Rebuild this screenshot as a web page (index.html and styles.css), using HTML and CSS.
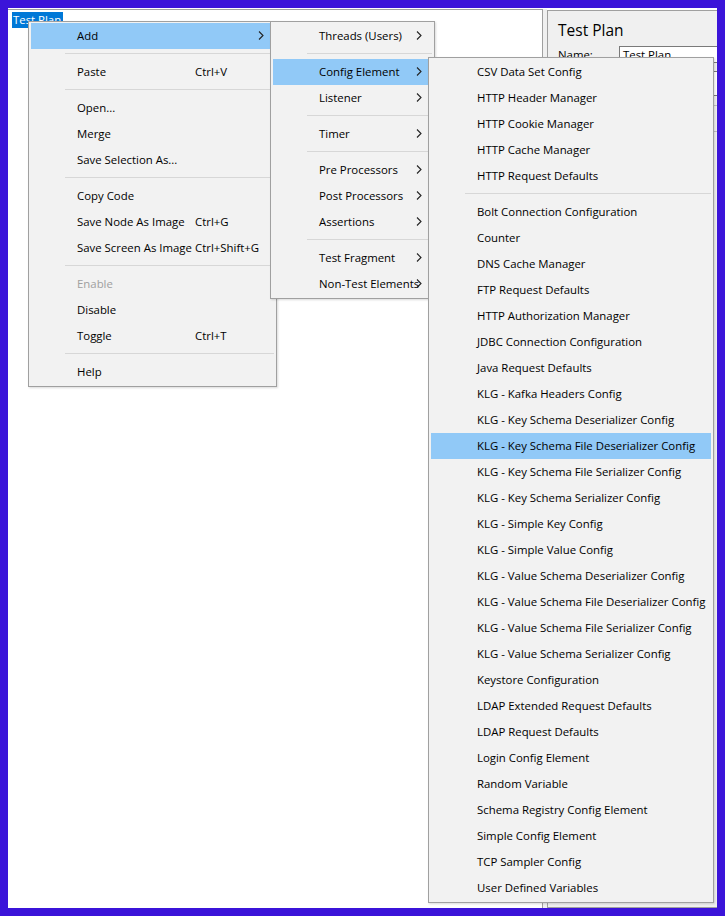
FILE: index.html
```html
<!DOCTYPE html>
<html lang="en">
<head>
  <meta charset="UTF-8"/>
  <title>Test Plan</title>
  <link rel="stylesheet" href="styles.css">
</head>
<body>

  <div class="app">
    <!-- Tree -->
    <div class="tree">
      <span class="node selected">Test Plan</span>
    </div>
    <div class="splitter"></div>

    <!-- Properties -->
    <div class="props">
      <div class="props-title">Test Plan</div>
      <div class="props-row">
        <label>Name:</label>
        <div class="field">Test Plan</div>
      </div>
      <div class="props-row">
        <label></label>
        <div class="field tall"></div>
      </div>
      <div class="group"></div>
      <div class="group"></div>
    </div>
  </div>

  <!-- Context menu -->
  <div class="menu menu-main">
    <div class="item active"><span class="text">Add</span><span class="key"></span><svg class="arrow" viewBox="0 0 6 9"><polyline points="1,0.5 5,4.5 1,8.5"/></svg></div>
    <div class="sep"></div>
    <div class="item"><span class="text">Paste</span><span class="key">Ctrl+V</span></div>
    <div class="sep"></div>
    <div class="item"><span class="text">Open...</span></div>
    <div class="item"><span class="text">Merge</span></div>
    <div class="item"><span class="text">Save Selection As...</span></div>
    <div class="sep"></div>
    <div class="item"><span class="text">Copy Code</span></div>
    <div class="item"><span class="text">Save Node As Image</span><span class="key">Ctrl+G</span></div>
    <div class="item"><span class="text">Save Screen As Image</span><span class="key">Ctrl+Shift+G</span></div>
    <div class="sep"></div>
    <div class="item disabled"><span class="text">Enable</span></div>
    <div class="item"><span class="text">Disable</span></div>
    <div class="item"><span class="text">Toggle</span><span class="key">Ctrl+T</span></div>
    <div class="sep"></div>
    <div class="item"><span class="text">Help</span></div>
  </div>

  <!-- Add submenu -->
  <div class="menu menu-add">
    <div class="item"><span class="text">Threads (Users)</span><svg class="arrow" viewBox="0 0 6 9"><polyline points="1,0.5 5,4.5 1,8.5"/></svg></div>
    <div class="sep"></div>
    <div class="item active"><span class="text">Config Element</span><svg class="arrow" viewBox="0 0 6 9"><polyline points="1,0.5 5,4.5 1,8.5"/></svg></div>
    <div class="item"><span class="text">Listener</span><svg class="arrow" viewBox="0 0 6 9"><polyline points="1,0.5 5,4.5 1,8.5"/></svg></div>
    <div class="sep"></div>
    <div class="item"><span class="text">Timer</span><svg class="arrow" viewBox="0 0 6 9"><polyline points="1,0.5 5,4.5 1,8.5"/></svg></div>
    <div class="sep"></div>
    <div class="item"><span class="text">Pre Processors</span><svg class="arrow" viewBox="0 0 6 9"><polyline points="1,0.5 5,4.5 1,8.5"/></svg></div>
    <div class="item"><span class="text">Post Processors</span><svg class="arrow" viewBox="0 0 6 9"><polyline points="1,0.5 5,4.5 1,8.5"/></svg></div>
    <div class="item"><span class="text">Assertions</span><svg class="arrow" viewBox="0 0 6 9"><polyline points="1,0.5 5,4.5 1,8.5"/></svg></div>
    <div class="sep"></div>
    <div class="item"><span class="text">Test Fragment</span><svg class="arrow" viewBox="0 0 6 9"><polyline points="1,0.5 5,4.5 1,8.5"/></svg></div>
    <div class="item"><span class="text">Non-Test Elements</span><svg class="arrow" viewBox="0 0 6 9"><polyline points="1,0.5 5,4.5 1,8.5"/></svg></div>
  </div>

  <!-- Config Element submenu -->
  <div class="menu menu-config">
    <div class="item"><span class="text">CSV Data Set Config</span></div>
    <div class="item"><span class="text">HTTP Header Manager</span></div>
    <div class="item"><span class="text">HTTP Cookie Manager</span></div>
    <div class="item"><span class="text">HTTP Cache Manager</span></div>
    <div class="item"><span class="text">HTTP Request Defaults</span></div>
    <div class="sep"></div>
    <div class="item"><span class="text">Bolt Connection Configuration</span></div>
    <div class="item"><span class="text">Counter</span></div>
    <div class="item"><span class="text">DNS Cache Manager</span></div>
    <div class="item"><span class="text">FTP Request Defaults</span></div>
    <div class="item"><span class="text">HTTP Authorization Manager</span></div>
    <div class="item"><span class="text">JDBC Connection Configuration</span></div>
    <div class="item"><span class="text">Java Request Defaults</span></div>
    <div class="item"><span class="text">KLG - Kafka Headers Config</span></div>
    <div class="item"><span class="text">KLG - Key Schema Deserializer Config</span></div>
    <div class="item active"><span class="text">KLG - Key Schema File Deserializer Config</span></div>
    <div class="item"><span class="text">KLG - Key Schema File Serializer Config</span></div>
    <div class="item"><span class="text">KLG - Key Schema Serializer Config</span></div>
    <div class="item"><span class="text">KLG - Simple Key Config</span></div>
    <div class="item"><span class="text">KLG - Simple Value Config</span></div>
    <div class="item"><span class="text">KLG - Value Schema Deserializer Config</span></div>
    <div class="item"><span class="text">KLG - Value Schema File Deserializer Config</span></div>
    <div class="item"><span class="text">KLG - Value Schema File Serializer Config</span></div>
    <div class="item"><span class="text">KLG - Value Schema Serializer Config</span></div>
    <div class="item"><span class="text">Keystore Configuration</span></div>
    <div class="item"><span class="text">LDAP Extended Request Defaults</span></div>
    <div class="item"><span class="text">LDAP Request Defaults</span></div>
    <div class="item"><span class="text">Login Config Element</span></div>
    <div class="item"><span class="text">Random Variable</span></div>
    <div class="item"><span class="text">Schema Registry Config Element</span></div>
    <div class="item"><span class="text">Simple Config Element</span></div>
    <div class="item"><span class="text">TCP Sampler Config</span></div>
    <div class="item"><span class="text">User Defined Variables</span></div>
  </div>

</body>
</html>
```

FILE: styles.css
```css
:root {
  --frame: #3b14d9;
  --ui-font: "Open Sans", "Noto Sans", sans-serif;
  --ui-size: 11.4px;
  --menu-bg: #f2f2f2;
  --menu-border: #a0a0a0;
  --menu-hover: #91c9f7;
  --sep: #d7d7d7;
}
* { margin:0; padding:0; box-sizing:border-box }
html, body { width:100%; height:100%; overflow:hidden }
body {
  background: var(--frame);
  padding: 8px;
  position: relative;
  font-family: var(--ui-font);
  font-size: var(--ui-size);
  color: #000;
}

/* Main window */
.app {
  display:flex;
  width:709px; height:900px;
  background:#fff;
  padding-top:1px;
}
.tree {
  width:535px;
  border-top:1px solid #a0a0a0;
  border-right:1px solid #a0a0a0;
  padding:2px 4px;
}
.node {
  display:inline-block;
  height:16px; line-height:16px;
  padding:0 2px 0 1px;
}
.node.selected { background:#0078d7; color:#fff }
.splitter { width:4px; background:#f0f0f0 }
.props {
  flex:1;
  margin-top:1px;
  background:#f0f0f0;
  border:1px solid #a0a0a0;
  border-right:none;
  padding:8px 0 0 10px;
  overflow:hidden;
}
.props-title { font-size:15.5px; line-height:22px; margin-bottom:5px }
.props-row { display:flex; align-items:center; margin-bottom:8px }
.props-row label { width:61px; flex:none }
.field {
  flex:1;
  height:17px; line-height:15px;
  background:#fff;
  border:1px solid #7a7a7a;
  border-right:none;
  padding-left:3px;
  white-space:nowrap;
}
.field.tall { height:25px }
.group { height:17px; border-top:1px solid #c0c0c0; margin-top:9px }

/* Popup menus */
.menu {
  position:absolute;
  background:var(--menu-bg);
  border:1px solid var(--menu-border);
  padding:1px 2px;
  box-shadow:1px 1px 2px rgba(0,0,0,0.15);
}
.menu-main   { left:28px;  top:21px; width:249px }
.menu-add    { left:270px; top:21px; width:165px }
.menu-config { left:428px; top:57px; width:286px }

.item {
  display:grid;
  grid-template-columns: minmax(0,1fr) auto;
  align-items:center;
  height:26px;
  padding:0 10px 1px 46px;
  white-space:nowrap;
}
.menu-main .item { grid-template-columns:118px minmax(0,1fr) 6px }
.item.active { background:var(--menu-hover) }
.item.disabled { color:#a0a0a0 }
.arrow {
  display:block;
  width:6px; height:9px;
  fill:none;
  stroke:#222;
  stroke-width:1.1;
}
.sep {
  height:1px;
  margin:4px 0 5px 34px;
  background:var(--sep);
}
```
